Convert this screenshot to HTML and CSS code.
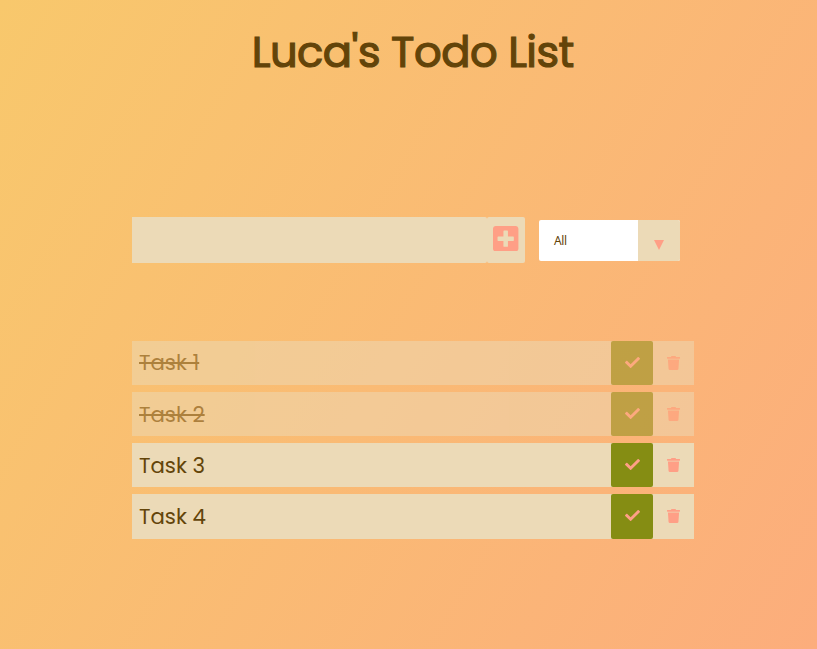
FILE: index.html
```html
<!DOCTYPE html>
<html lang="en">
<head>
<meta charset="utf-8">
<title>Luca's Todo List</title>
<link rel="stylesheet" href="styles.css">
</head>
<body>
<svg class="symbols" aria-hidden="true">
  <symbol id="check" viewBox="0 0 512 512"><path d="M173.898 439.404l-166.400-166.400c-9.997-9.997-9.997-26.206 0-36.204l36.203-36.204c9.997-9.998 26.207-9.998 36.204 0L192 312.690 432.095 72.596c9.997-9.997 26.207-9.997 36.204 0l36.203 36.204c9.997 9.997 9.997 26.206 0 36.204l-294.400 294.401c-9.998 9.997-26.207 9.997-36.204-.001z"/></symbol>
  <symbol id="trash" viewBox="0 0 448 512" preserveAspectRatio="none"><path d="M432 32H312l-9.400-18.700A24 24 0 0 0 281.100 0H166.800a23.720 23.720 0 0 0-21.400 13.300L136 32H16A16 16 0 0 0 0 48v32a16 16 0 0 0 16 16h416a16 16 0 0 0 16-16V48a16 16 0 0 0-16-16zM53.200 467a48 48 0 0 0 47.900 45h245.800a48 48 0 0 0 47.900-45L416 128H32z"/></symbol>
</svg>
<header><h1>Luca's Todo List</h1></header>
<form>
  <input class="todo-input" type="text" aria-label="New task">
  <button class="add" type="button" aria-label="Add">
    <svg viewBox="0 0 448 448"><path d="M400 0H48C21.500 0 0 21.500 0 48v352c0 26.500 21.500 48 48 48h352c26.500 0 48-21.500 48-48V48c0-26.500-21.500-48-48-48zm-32 252c0 6.600-5.400 12-12 12h-92v92c0 6.600-5.400 12-12 12h-56c-6.600 0-12-5.400-12-12v-92H92c-6.600 0-12-5.400-12-12v-56c0-6.600 5.400-12 12-12h92v-92c0-6.600 5.400-12 12-12h56c6.600 0 12 5.400 12 12v92h92c6.600 0 12 5.400 12 12v56z"/></svg>
  </button>
  <div class="select"><span class="value">All</span><span class="arrow"><svg viewBox="0 0 10 10"><path d="M0 0h10L5 10z"/></svg></span></div>
</form>
<ul>
  <li class="completed"><span class="task">Task 1</span><button class="done"><svg><use href="#check"/></svg></button><button class="remove"><svg><use href="#trash"/></svg></button></li>
  <li class="completed"><span class="task">Task 2</span><button class="done"><svg><use href="#check"/></svg></button><button class="remove"><svg><use href="#trash"/></svg></button></li>
  <li><span class="task">Task 3</span><button class="done"><svg><use href="#check"/></svg></button><button class="remove"><svg><use href="#trash"/></svg></button></li>
  <li><span class="task">Task 4</span><button class="done"><svg><use href="#check"/></svg></button><button class="remove"><svg><use href="#trash"/></svg></button></li>
</ul>
</body>
</html>
```
FILE: styles.css
```css
* { margin: 0; padding: 0; box-sizing: border-box; }
body {
  min-height: 100vh;
  background: linear-gradient(120deg, #f8c86c, #fcad7c);
  color: #634409;
  font-family: Poppins, Inter, sans-serif;
}
.symbols { display: none; }
header { height: 217px; padding-top: 20px; text-align: center; }
h1 {
  padding-left: 8.5px;
  font-size: 43.3px;
  font-weight: 400;
  line-height: 64px;
  letter-spacing: -0.52px;
  -webkit-text-stroke: 1.2px #634409;
}
form { display: flex; height: 46px; margin-left: 132px; }
input, button { border: none; border-radius: 2px; background: #ecdab7; }
.todo-input { width: 355px; border-radius: 0 2px 2px 0; }
.add { width: 38px; padding: 0 6px 3px 6.5px; }
.add svg { display: block; width: 25.4px; height: 25.4px; margin-left: -0.3px; fill: #ff9f86; }
.select {
  display: flex;
  width: 141px;
  height: 41px;
  margin: 3px 0 0 14px;
  border-radius: 2px;
  overflow: hidden;
  background: #fff;
}
.value { width: 99px; padding-left: 15px; font: 12px/42px "Noto Sans", sans-serif; letter-spacing: -0.4px; }
.arrow { width: 42px; padding: 20px 0 0 16px; background: #ecdab7; }
.arrow svg { display: block; width: 10px; height: 10px; fill: #ff9f86; }
ul { list-style: none; width: 562px; margin: 77.6px 0 0 132px; }
li { display: flex; height: 44.4px; margin-bottom: 6.8px; background: #ecdab7; }
.completed { opacity: 0.5; }
.task { flex: 1; padding-left: 7px; font-size: 21.3px; letter-spacing: -0.05px; line-height: 45.4px; }
.completed .task { text-decoration: line-through; }
.completed:first-child .task { line-height: 44.4px; }
.done, .remove { display: flex; align-items: center; justify-content: center; }
.done { width: 42px; padding-bottom: 1px; background: #858d13; }
.remove { width: 41px; }
li svg { width: 15px; height: 15px; fill: #ff9f86; }
.remove svg { width: 13px; height: 14px; }
```
